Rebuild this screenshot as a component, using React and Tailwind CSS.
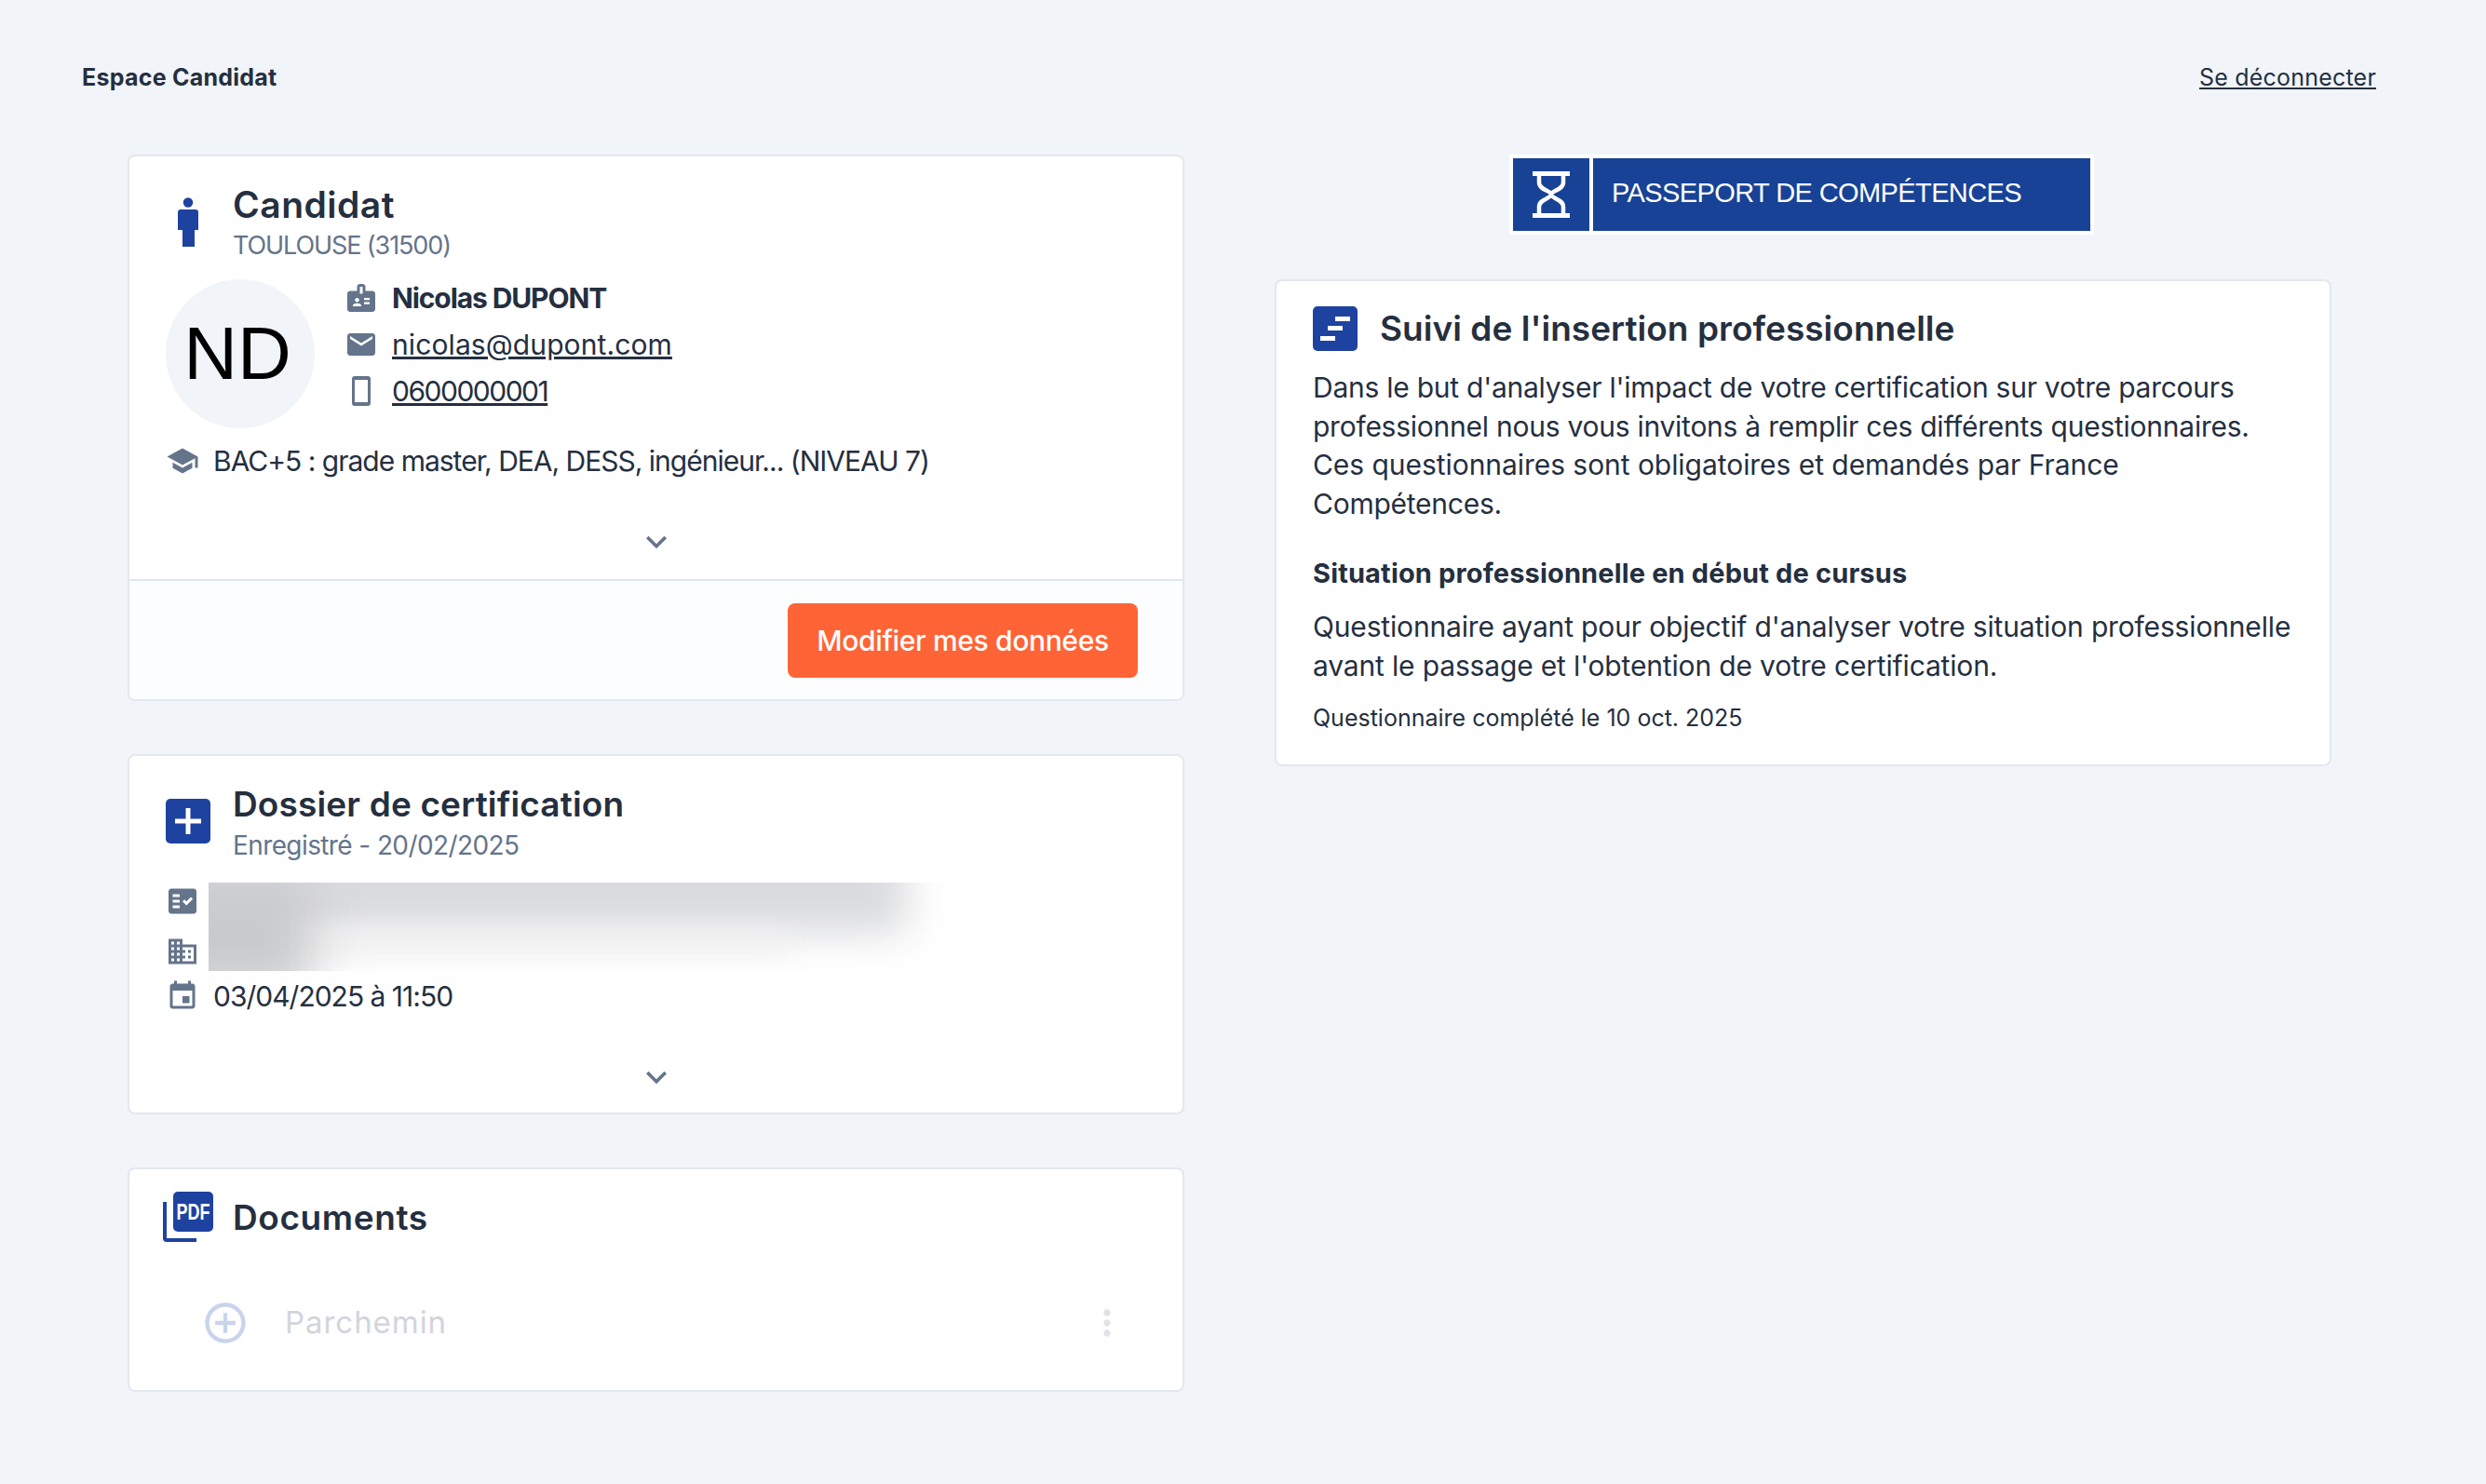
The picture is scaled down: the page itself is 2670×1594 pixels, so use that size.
import React from "react";
import {
  MdBadge,
  MdEmail,
  MdSchool,
  MdFactCheck,
  MdDomain,
  MdEvent,
  MdKeyboardArrowDown,
  MdAddCircleOutline,
  MdMoreVert,
} from "react-icons/md";

const sans = "font-['Inter',sans-serif]";

function Chevron() {
  return (
    <div className="flex justify-center">
      <MdKeyboardArrowDown className="w-[44px] h-[44px] text-[#64748b]" />
    </div>
  );
}

function PersonIcon() {
  return (
    <svg viewBox="0 0 22 54" className="w-[22px] h-[54px] fill-[#1e429f]">
      <circle cx="11" cy="5.5" r="5.2" />
      <path d="M3 13h16a3 3 0 0 1 3 3v19h-4v18H5V35H0V16a3 3 0 0 1 3-3z" />
    </svg>
  );
}

function PhoneIcon() {
  return (
    <svg viewBox="0 0 36 36" className="w-9 h-9">
      <path
        fillRule="evenodd"
        d="M11 2h14a3 3 0 0 1 3 3v26a3 3 0 0 1-3 3H11a3 3 0 0 1-3-3V5a3 3 0 0 1 3-3zm0 4v24h14V6z"
        fill="#64748b"
      />
    </svg>
  );
}

function PlusSquare() {
  return (
    <div className="w-12 h-12 rounded-[5px] bg-[#1e429f] flex items-center justify-center">
      <svg viewBox="0 0 28 28" className="w-7 h-7 fill-white">
        <path d="M11.5 0h5v11.5H28v5H16.5V28h-5V16.5H0v-5h11.5z" />
      </svg>
    </div>
  );
}

function GanttIcon() {
  return (
    <div className="w-12 h-12 rounded-[5px] bg-[#1e429f]">
      <svg viewBox="0 0 48 48" className="w-12 h-12 fill-white">
        <rect x="24" y="11" width="16" height="5" />
        <rect x="16" y="21" width="16" height="5" />
        <rect x="8" y="32" width="16" height="5" />
      </svg>
    </div>
  );
}

function PdfIcon() {
  return (
    <svg viewBox="0 0 54 54" className="w-[54px] h-[54px]">
      <path d="M0 11h4v39h32v4H4a4 4 0 0 1-4-4z" fill="#1e429f" />
      <rect x="11" y="0" width="43" height="43" rx="5" fill="#1e429f" />
      <text
        transform="translate(32.5 30) scale(0.9 1.15)"
        textAnchor="middle"
        fill="#fff"
        fontSize="20"
        fontWeight="700"
        fontFamily="Liberation Sans, sans-serif"
      >
        PDF
      </text>
    </svg>
  );
}

function HourglassIcon() {
  return (
    <svg viewBox="0 0 40 50" className="w-10 h-[50px]" fill="none" stroke="#fff">
      <path d="M0 2.5h40M0 47.5h40" strokeWidth="5" />
      <path
        d="M7 4v8c0 8 13 9 13 13s-13 5-13 13v8M33 4v8c0 8-13 9-13 13s13 5 13 13v8"
        strokeWidth="4.5"
      />
    </svg>
  );
}

// blurred-out text from the original, soft grey smears
function BlurBlock() {
  return (
    <div className="relative w-[790px] h-[95px] overflow-hidden bg-white">
      <div className="absolute -left-[40px] -top-[36px] w-[790px] h-[90px] bg-[#d9dadd] blur-[22px]" />
      <div className="absolute -left-[40px] top-[52px] w-[660px] h-[24px] bg-[#f0f0f1] blur-[14px]" />
      <div className="absolute -left-[60px] -top-[10px] w-[170px] h-[130px] bg-[#c9cacd] blur-[26px]" />
    </div>
  );
}

export default function App() {
  return (
    <div className={`min-h-[1594px] bg-[#f1f4f9] text-[#252f3f] ${sans}`}>
      <header className="flex justify-between items-center pt-[68px] pl-[88px] pr-[118px] h-[98px]">
        <span className="text-[25px] leading-[30px] font-bold tracking-[0.25px]">Espace Candidat</span>
        <a className="text-[25px] leading-[30px] underline tracking-[0.2px]">Se déconnecter</a>
      </header>

      <main className="flex items-start gap-[97px] pl-[137px] pt-[68px]">
        <div className="w-[1135px] flex flex-col gap-[57px]">
          <section className="bg-white border-2 border-[#e2e8f0] rounded-lg overflow-hidden">
            <div className="pt-[28px] pl-[39px] h-[454px]">
              <div className="flex">
                <div className="w-[48px] flex justify-center pt-[16px]">
                  <PersonIcon />
                </div>
                <div className="pl-[24px]">
                  <h2 className="text-[39px] leading-[48px] font-semibold tracking-[0.5px]">Candidat</h2>
                  <p className="text-[27px] leading-[40px] text-[#64748b] tracking-[-1.1px]">TOULOUSE (31500)</p>
                </div>
              </div>
              <div className="flex mt-[16px]">
                <div className="w-40 h-40 rounded-full bg-[#f1f4f9] flex items-center justify-center pr-[6px] font-['Liberation_Sans',sans-serif] text-[80px] text-black">
                  ND
                </div>
                <div className="pl-[32px] flex flex-col -mt-[5px]">
                  <div className="flex items-center h-[50px]">
                    <MdBadge className="w-[36px] h-[36px] text-[#64748b]" />
                    <span className="pl-[15px] text-[30px] font-bold tracking-[-1.1px]">Nicolas DUPONT</span>
                  </div>
                  <div className="flex items-center h-[50px]">
                    <MdEmail className="w-[36px] h-[36px] text-[#64748b]" />
                    <a className="pl-[15px] text-[30px] underline tracking-[0.1px]">nicolas@dupont.com</a>
                  </div>
                  <div className="flex items-center h-[50px]">
                    <PhoneIcon />
                    <a className="pl-[15px] text-[30px] underline tracking-[-1.5px]">0600000001</a>
                  </div>
                </div>
              </div>
              <div className="flex items-center mt-[14px] h-[42px]">
                <MdSchool className="w-[36px] h-[36px] text-[#64748b]" />
                <span className="pl-[15px] text-[30px] tracking-[-1px]">BAC+5 : grade master, DEA, DESS, ingénieur... (NIVEAU 7)</span>
              </div>
              <div className="mt-[44px] -ml-[39px]">
                <Chevron />
              </div>
            </div>
            <div className="h-[129px] border-t-2 border-[#e2e8f0] bg-[#fcfdfe] flex justify-end items-start pt-[24px] pr-[48px]">
              <button className="w-[376px] h-[80px] rounded-lg bg-[#ff6436] text-white text-[30px] font-medium tracking-[-0.35px]">
                Modifier mes données
              </button>
            </div>
          </section>

          <section className="bg-white border-2 border-[#e2e8f0] rounded-lg h-[387px] pt-[28px] pl-[39px]">
            <div className="flex">
              <div className="pt-[18px]">
                <PlusSquare />
              </div>
              <div className="pl-[24px]">
                <h2 className="text-[37px] leading-[48px] font-semibold tracking-[0.15px]">Dossier de certification</h2>
                <p className="text-[28px] leading-[40px] text-[#64748b] tracking-[-0.6px]">Enregistré - 20/02/2025</p>
              </div>
            </div>
            <div className="flex mt-[20px]">
              <div className="w-[46px] flex flex-col pt-[2px] gap-[18px]">
                <MdFactCheck className="w-[36px] h-[36px] text-[#64748b]" />
                <MdDomain className="w-[36px] h-[36px] text-[#64748b]" />
              </div>
              <BlurBlock />
            </div>
            <div className="flex items-center h-[50px] mt-[2px]">
              <MdEvent className="w-[36px] h-[36px] text-[#64748b]" />
              <span className="pl-[15px] text-[30px] tracking-[-1px]">03/04/2025 à 11:50</span>
            </div>
            <div className="mt-[40px] -ml-[39px]">
              <Chevron />
            </div>
          </section>

          <section className="bg-white border-2 border-[#e2e8f0] rounded-lg h-[241px] pt-[24px] pl-[36px]">
            <div className="flex items-center">
              <PdfIcon />
              <h2 className="pl-[21px] text-[37px] leading-[48px] font-semibold mt-[2px] tracking-[0.6px]">Documents</h2>
            </div>
            <div className="flex items-center mt-[61px] pl-[41px] pr-[59px]">
              <MdAddCircleOutline className="w-[52px] h-[52px] text-[#c9d4ec]" />
              <span className="pl-[38px] text-[33px] text-[#d1d5db] tracking-[0.95px]">Parchemin</span>
              <MdMoreVert className="ml-auto w-[44px] h-[44px] text-[#dfe2e7]" />
            </div>
          </section>
        </div>

        <div className="w-[1135px] flex flex-col">
          <div className="self-center -ml-[3px] flex gap-[4px] p-[4px] bg-white h-[86px]">
            <div className="w-[82px] bg-[#184296] flex items-center justify-center">
              <HourglassIcon />
            </div>
            <div className="w-[534px] bg-[#184296] flex items-center pl-[20px] pb-[3px] font-['Liberation_Sans',sans-serif] text-[29px] tracking-[-0.6px] text-white">
              PASSEPORT DE COMPÉTENCES
            </div>
          </div>
          <section className="mt-[48px] bg-white border-2 border-[#e2e8f0] rounded-lg h-[523px] pt-[27px] pl-[39px] pr-[30px]">
            <div className="flex items-center">
              <GanttIcon />
              <h2 className="pl-[24px] text-[37px] leading-[48px] font-semibold tracking-[0.03px]">Suivi de l'insertion professionnelle</h2>
            </div>
            <p className="mt-[19px] text-[30px] leading-[41.7px] tracking-[-0.25px]">
              Dans le but d'analyser l'impact de votre certification sur votre parcours
              <br />
              professionnel nous vous invitons à remplir ces différents questionnaires.
              <br />
              <span className="tracking-[-0.05px]">Ces questionnaires sont obligatoires et demandés par France</span>
              <br />
              Compétences.
            </p>
            <h3 className="mt-[32px] text-[29px] leading-[42px] font-bold tracking-[0.15px]">
              Situation professionnelle en début de cursus
            </h3>
            <p className="mt-[16px] text-[30px] leading-[41.7px] tracking-[-0.16px]">
              Questionnaire ayant pour objectif d'analyser votre situation professionnelle
              <br />
              avant le passage et l'obtention de votre certification.
            </p>
            <p className="mt-[17px] text-[25px] leading-[36px]">Questionnaire complété le 10 oct. 2025</p>
          </section>
        </div>
      </main>
    </div>
  );
}
